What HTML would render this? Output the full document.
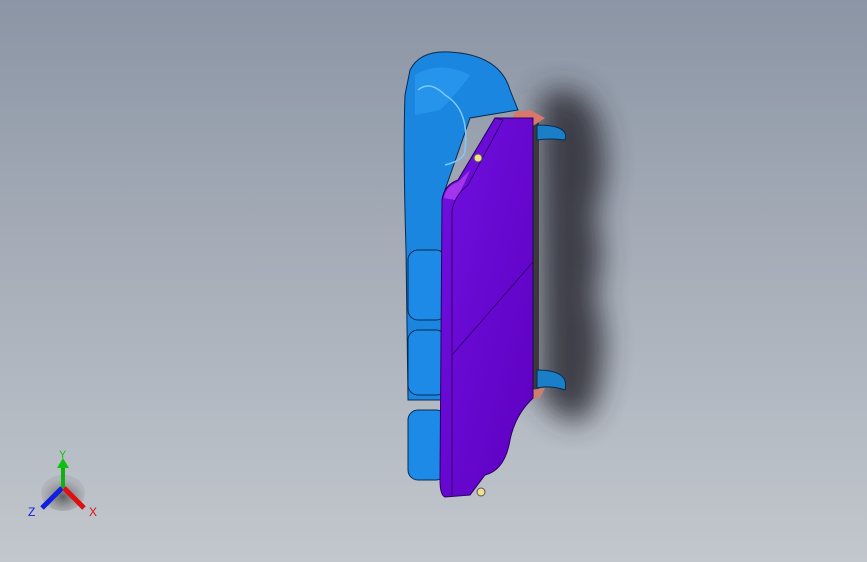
<!DOCTYPE html>
<html><head><style>
html,body{margin:0;padding:0;width:867px;height:562px;overflow:hidden}
body{background:linear-gradient(180deg,#8b95a5 0%,#a6adb8 45%,#c2c7cd 100%);}
</style></head><body>
<svg width="867" height="562" viewBox="0 0 867 562" style="position:absolute;left:0;top:0">
<defs>
<filter id="bl" x="-60%" y="-30%" width="220%" height="160%"><feGaussianBlur stdDeviation="14"/></filter>
<linearGradient id="pg" x1="0" y1="0" x2="1" y2="1"><stop offset="0" stop-color="#7010e0"/><stop offset="1" stop-color="#5e00c0"/></linearGradient>
<radialGradient id="ax" cx="0.5" cy="0.6" r="0.5"><stop offset="0" stop-color="#333" stop-opacity=".7"/><stop offset="1" stop-color="#888" stop-opacity=".2"/></radialGradient>
</defs>
<!-- shadow -->
<path d="M540 95 Q585 75 600 125 Q612 175 595 215 Q608 255 595 295 Q610 335 600 385 Q592 430 565 420 L540 400 Z" fill="#30333a" opacity=".9" filter="url(#bl)"/>
<!-- blue body -->
<path d="M410 70 Q420 50 450 52 Q500 55 510 90 L518 110 L470 118 L445 190 L445 400 L408 400 L406 250 Q403 150 405 95 Z" fill="#1a86e0" stroke="#0a2a50" stroke-width="1"/>
<path d="M415 75 Q440 60 470 75 Q460 90 440 110 L415 115 Z" fill="#2c9af0" opacity=".7"/>
<path d="M418 90 Q430 80 445 95 Q470 110 465 150 Q465 160 445 165" fill="none" stroke="#7ccaff" stroke-width="1.5"/>
<rect x="408" y="250" width="38" height="70" rx="10" fill="#1c8ae6" stroke="#0a2a50"/>
<rect x="408" y="330" width="38" height="65" rx="10" fill="#1c8ae6" stroke="#0a2a50"/>
<rect x="408" y="410" width="38" height="70" rx="10" fill="#1c8ae6" stroke="#0a2a50"/>
<!-- dark rail -->
<rect x="533" y="118" width="6" height="280" fill="#3a3a3a"/>
<!-- hooks -->
<path d="M537 125 Q570 125 565 140 Q550 138 537 140 Z" fill="#1a7fc8" stroke="#0a2a50"/>
<path d="M537 370 Q570 370 565 390 Q550 385 537 388 Z" fill="#1a7fc8" stroke="#0a2a50"/>
<path d="M515 112 L530 110 L545 118 L530 128 L510 125 Z" fill="#d9776a"/>
<path d="M530 390 L545 388 L540 398 L528 400 Z" fill="#c98070"/>
<!-- purple panel -->
<path d="M442 200 Q444 185 458 180 L495 118 L533 118 L533 398 Q515 415 510 440 Q505 470 485 475 L470 495 L445 497 Q440 495 440 480 Z" fill="url(#pg)" stroke="#2a0060" stroke-width="1"/>
<path d="M444 198 Q446 186 458 182 L470 170 Q462 190 455 200 Z" fill="#b040f0" opacity=".8"/>
<path d="M442 200 Q444 185 458 180 L495 118 L503 120 L468 185 Q455 195 452 210 L452 495" fill="none" stroke="#2a0060" stroke-width=".8"/>
<path d="M452 355 L533 262" stroke="#2a0060" stroke-width=".8"/>
<circle cx="478" cy="158" r="4" fill="#f0e090" stroke="#555"/>
<circle cx="481" cy="492" r="4" fill="#f0e090" stroke="#555"/>
<!-- triad -->
<ellipse cx="63" cy="493" rx="22" ry="18" fill="url(#ax)"/>
<line x1="63" y1="488" x2="63" y2="465" stroke="#10b010" stroke-width="4"/>
<path d="M57 468 L63 458 L69 468 Z" fill="#10c010"/>
<line x1="62" y1="488" x2="42" y2="508" stroke="#1020e0" stroke-width="5"/>
<line x1="64" y1="488" x2="84" y2="508" stroke="#e01010" stroke-width="5"/>
<text x="59" y="458" font-family="Liberation Sans,sans-serif" font-size="11" fill="#10c010">Y</text>
<text x="28" y="516" font-family="Liberation Sans,sans-serif" font-size="12" fill="#1020e0">Z</text>
<text x="89" y="516" font-family="Liberation Sans,sans-serif" font-size="12" fill="#e01010">X</text>
</svg>
</body></html>
